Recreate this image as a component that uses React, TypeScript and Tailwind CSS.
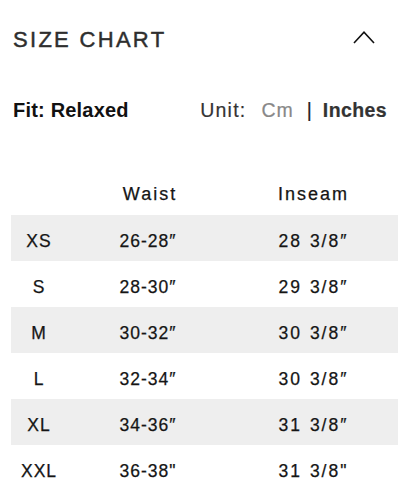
import React from "react";

const rows = [
  ["XS", "26-28″", "28 3/8″"],
  ["S", "28-30″", "29 3/8″"],
  ["M", "30-32″", "30 3/8″"],
  ["L", "32-34″", "30 3/8″"],
  ["XL", "34-36″", "31 3/8″"],
  ["XXL", "36-38\"", "31 3/8\""],
];

export default function App() {
  return (
    <div
      className="w-[416px] h-[497px] bg-white overflow-hidden text-[#151515]"
      style={{ fontFamily: "'Liberation Sans', Arial, sans-serif" }}
    >
      <div className="flex items-start justify-between pl-[13px] pr-[41px] pt-[26px] h-[56px]">
        <h2 className="text-[22px] leading-[28px] tracking-[2.3px] text-[#2e2e2e] font-normal [-webkit-text-stroke:0.45px_#2e2e2e]">SIZE CHART</h2>
        <svg width="22" height="13" viewBox="0 0 22 13" fill="none" className="mt-[5px]">
          <path d="M1 12 L11 1.2 L21 12" stroke="#111" strokeWidth="1.6" />
        </svg>
      </div>
      <div className="flex items-center justify-between pl-[13px] pr-[29px] mt-[42px] h-[24px]">
        <span className="text-[20px] leading-[24px] font-bold tracking-[0.2px] text-[#111]">Fit: Relaxed</span>
        <div className="flex items-center text-[19.5px] leading-[24px] text-[#333] [-webkit-text-stroke:0.2px_currentColor]">
          <span className="tracking-[1.2px]">Unit:</span>
          <span className="ml-[15px] tracking-[1px] text-[#888]">Cm</span>
          <span className="ml-[13px] text-[#222]">|</span>
          <span className="ml-[11px] font-bold tracking-[0.4px]">Inches</span>
        </div>
      </div>
      <div className="mx-[11px] w-[387px] mt-[60px] [-webkit-text-stroke:0.25px_#151515]">
        <div className="flex h-[33px] items-start text-[18px] leading-[24px] tracking-[2px]">
          <div className="w-[56px]" />
          <div className="w-[162px] text-center pl-[4px]">Waist</div>
          <div className="flex-1 text-center">Inseam</div>
        </div>
        {rows.map((r, i) => (
          <div
            key={r[0]}
            className={`flex h-[46px] items-center pt-[5px] text-[17.5px] leading-[24px] ${i % 2 === 0 ? "bg-[#eeeeee]" : "bg-white"}`}
          >
            <div className="w-[56px] text-center tracking-[1px]">{r[0]}</div>
            <div className="w-[162px] text-center tracking-[1px]">{r[1]}</div>
            <div className="flex-1 text-center tracking-[2px] [word-spacing:1px]">{r[2]}</div>
          </div>
        ))}
      </div>
    </div>
  );
}
